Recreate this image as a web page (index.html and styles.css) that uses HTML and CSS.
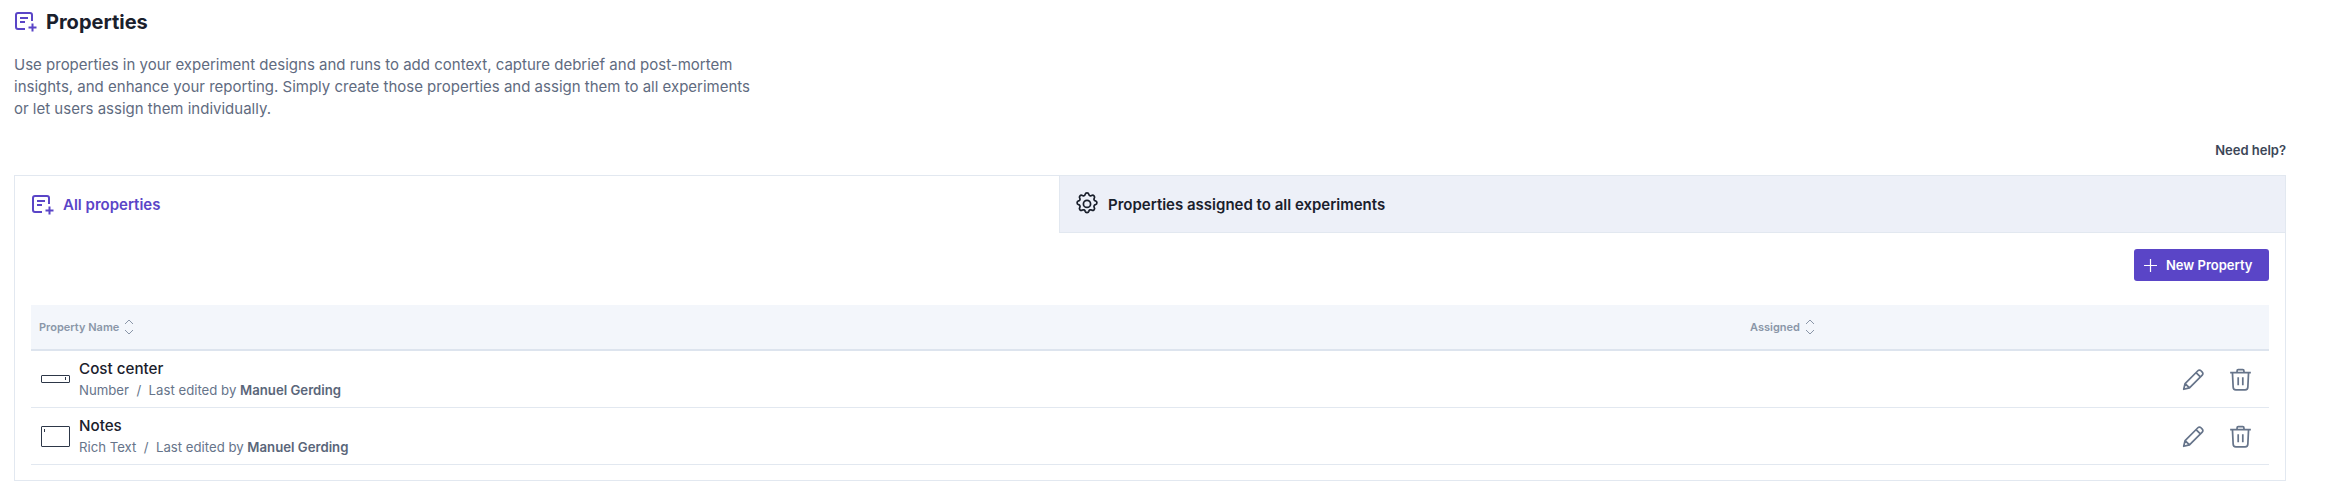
FILE: index.html
```html
<!DOCTYPE html>
<html lang="en">
<head>
  <meta charset="UTF-8" />
  <meta name="viewport" content="width=device-width, initial-scale=1.0"/>
  <title>Properties</title>
  <link rel="stylesheet" href="styles.css">
</head>
<body>
  <svg class="defs" width="0" height="0">
    <symbol id="i-props" viewBox="0 0 22 20">
      <path d="M10 17H3a2 2 0 0 1-2-2V3a2 2 0 0 1 2-2h12a2 2 0 0 1 2 2v6M5 6h8M5 10h5M17.5 11.5v8M13.5 15.5h8" fill="none" stroke="currentColor" stroke-width="2"/>
    </symbol>
    <symbol id="i-sort" viewBox="0 0 10 18">
      <path d="M1 6l4-4 4 4M1 12l4 4 4-4" fill="none" stroke="currentColor" stroke-width="1"/>
    </symbol>
    <symbol id="i-edit" viewBox="0 0 20 20">
      <path d="M1.5 18.5l1.2-5L13.8 2.4a1.9 1.9 0 0 1 2.7 0l1.1 1.1a1.9 1.9 0 0 1 0 2.7L6.5 17.3zM2.7 13.5l3.8 3.8M12.2 4l3.8 3.8" fill="none" stroke="currentColor" stroke-width="1.5" stroke-linejoin="round"/>
    </symbol>
    <symbol id="i-trash" viewBox="0 0 20 20">
      <path d="M1 4h18M7 4V2.5a1 1 0 0 1 1-1h4a1 1 0 0 1 1 1V4M3 4l.6 12.5A2.5 2.5 0 0 0 6 19h8a2.5 2.5 0 0 0 2.4-2.5L17 4M8 8v7M12 8v7" fill="none" stroke="currentColor" stroke-width="1.5"/>
    </symbol>
  </svg>

  <div class="page-title">
    <svg class="title-icon"><use href="#i-props"/></svg>
    <h1>Properties</h1>
  </div>
  <p class="intro">Use properties in your experiment designs and runs to add context, capture debrief and post-mortem insights, and enhance your reporting. Simply create those properties and assign them to all experiments or let users assign them individually.</p>
  <div class="help"><a href="#">Need help?</a></div>

  <div class="card">
    <div class="tabs">
      <div class="tab active">
        <svg class="tab-icon"><use href="#i-props"/></svg>
        All properties
      </div>
      <div class="tab">
        <svg class="tab-icon gear" viewBox="0 0 24 24">
          <path d="M10.3 3.1c.4-1.8 3-1.800 3.400 0a1.700 1.700 0 0 0 2.600 1.100c1.600-1 3.400.9 2.400 2.400a1.700 1.700 0 0 0 1.100 2.600c1.800.4 1.800 3 0 3.400a1.700 1.700 0 0 0-1.100 2.600c1 1.600-.8 3.400-2.400 2.400a1.700 1.700 0 0 0-2.600 1.100c-.4 1.800-3 1.800-3.400 0a1.700 1.700 0 0 0-2.600-1.100c-1.600 1-3.400-.8-2.400-2.400a1.700 1.700 0 0 0-1.100-2.600c-1.800-.4-1.800-3 0-3.400a1.700 1.700 0 0 0 1.100-2.600c-1-1.500.8-3.400 2.400-2.400a1.700 1.700 0 0 0 2.600-1.100z" fill="none" stroke="currentColor" stroke-width="1.600"/>
          <circle cx="12" cy="11.900" r="3.300" fill="none" stroke="currentColor" stroke-width="1.600"/>
        </svg>
        Properties assigned to all experiments
      </div>
    </div>

    <div class="card-body">
      <div class="toolbar">
        <button class="btn-new">
          <svg class="plus" viewBox="0 0 14 14"><path d="M7 0v14M0 7h14" fill="none" stroke="currentColor" stroke-width="1.300"/></svg>
          New Property
        </button>
      </div>

      <div class="list-head">
        <div class="col-name">Property Name <svg class="sort"><use href="#i-sort"/></svg></div>
        <div class="col-assigned">Assigned <svg class="sort"><use href="#i-sort"/></svg></div>
      </div>

      <div class="row">
        <div class="type-icon"><span class="input-shape number"><i></i></span></div>
        <div class="col-info">
          <div class="prop-name">Cost center</div>
          <div class="prop-meta">Number &nbsp;/&nbsp; Last edited by <b>Manuel Gerding</b></div>
        </div>
        <div class="actions">
          <svg class="action"><use href="#i-edit"/></svg>
          <svg class="action"><use href="#i-trash"/></svg>
        </div>
      </div>

      <div class="row">
        <div class="type-icon"><span class="input-shape rich"><i></i></span></div>
        <div class="col-info">
          <div class="prop-name">Notes</div>
          <div class="prop-meta">Rich Text &nbsp;/&nbsp; Last edited by <b>Manuel Gerding</b></div>
        </div>
        <div class="actions">
          <svg class="action"><use href="#i-edit"/></svg>
          <svg class="action"><use href="#i-trash"/></svg>
        </div>
      </div>
    </div>
  </div>
</body>
</html>
```

FILE: styles.css
```css
body {
  font-family: Inter, 'Noto Sans', sans-serif;
  background-color: #ffffff;
  margin: 0;
  padding: 0 44px 0 14px;
  color: #1a202c;
}

.defs {
  position: absolute;
}

.page-title {
  display: flex;
  align-items: center;
  gap: 9px;
  height: 44px;
  padding-left: 1px;
}

.title-icon {
  width: 22px;
  height: 20px;
  color: #5a45c7;
}

h1 {
  margin: 0;
  font-size: 20px;
  font-weight: 700;
  color: #1a202c;
}

.intro {
  width: 745px;
  margin: 10px 0 0;
  font-size: 15px;
  line-height: 22px;
  color: #5f6b80;
}

.help {
  margin-top: 18px;
  height: 24px;
  text-align: right;
}

.help a {
  font-size: 13px;
  font-weight: 600;
  line-height: 24px;
  color: #3c4657;
  text-decoration: none;
}

.card {
  border: 1px solid #e2e8f0;
  height: 306px;
  box-sizing: border-box;
  margin-top: 13px;
}

.tabs {
  display: flex;
  height: 57px;
}

.tab {
  display: flex;
  align-items: center;
  gap: 8px;
  font-size: 15px;
  font-weight: 600;
  box-sizing: border-box;
  flex: 1;
  padding-left: 14px;
  background-color: #edf0f8;
  border-left: 1px solid #e2e8f0;
  border-bottom: 1px solid #e2e8f0;
  color: #1a202c;
}

.tab.active {
  flex: 0 0 1044px;
  gap: 9px;
  padding-left: 17px;
  background-color: #ffffff;
  border: 0;
  color: #5a45c7;
}

.tab-icon {
  width: 22px;
  height: 20px;
}

.tab-icon.gear {
  width: 26px;
  height: 26px;
}

.card-body {
  padding: 16px 16px 0;
}

.toolbar {
  display: flex;
  justify-content: flex-end;
}

.btn-new {
  display: flex;
  align-items: center;
  gap: 9px;
  width: 135px;
  height: 32px;
  padding: 0 0 0 10px;
  font-family: inherit;
  font-size: 13px;
  font-weight: 600;
  color: #ffffff;
  background-color: #5a45c7;
  border: none;
  border-radius: 3px;
}

.plus {
  width: 13px;
  height: 13px;
}

.list-head {
  display: flex;
  align-items: center;
  height: 46px;
  box-sizing: border-box;
  margin-top: 24px;
  background-color: #f3f6fb;
  border-bottom: 2px solid #dde4ee;
  font-size: 11px;
  font-weight: 600;
  color: #8a96a8;
}

.col-name {
  display: flex;
  align-items: center;
  gap: 5px;
  flex: 0 0 1719px;
  padding-left: 8px;
  box-sizing: border-box;
}

.col-assigned {
  display: flex;
  align-items: center;
  gap: 5px;
}

.sort {
  width: 10px;
  height: 18px;
}

.row {
  display: flex;
  align-items: center;
  height: 57px;
  box-sizing: border-box;
  border-bottom: 1px solid #e2e8f0;
}

.type-icon {
  display: flex;
  align-items: center;
  justify-content: center;
  flex: 0 0 48px;
  padding-left: 1px;
  box-sizing: border-box;
}

.input-shape {
  display: block;
  box-sizing: border-box;
  width: 29px;
  border: 1px solid #2d3748;
  border-radius: 1px;
  position: relative;
}

.input-shape i {
  position: absolute;
  width: 1px;
  height: 3px;
  background-color: #2d3748;
}

.input-shape.number {
  height: 8px;
}

.input-shape.number i {
  right: 3px;
  top: 1px;
}

.input-shape.rich {
  height: 21px;
}

.input-shape.rich i {
  left: 2px;
  top: 2px;
}

.col-info {
  flex: 1;
}

.prop-name {
  font-size: 15.2px;
  line-height: 20px;
  font-weight: 500;
  color: #1a202c;
  padding-top: 1px;
}

.prop-meta {
  margin-top: 1px;
  font-size: 13.2px;
  line-height: 20px;
  color: #66748a;
}

.prop-meta b {
  font-weight: 600;
  color: #5a667a;
}

.actions {
  display: flex;
  gap: 24px;
  padding-right: 17px;
  color: #66748a;
}

.action {
  width: 23px;
  height: 23px;
}
```
